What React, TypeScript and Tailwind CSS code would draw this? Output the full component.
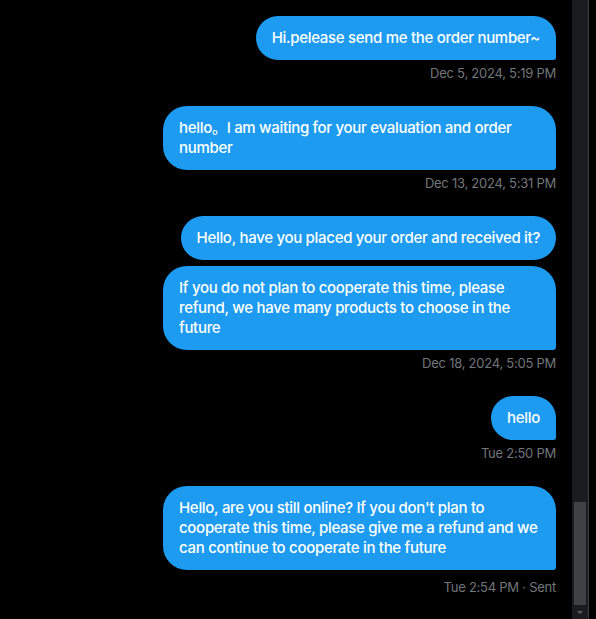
import React from "react";

type Msg = { text: string; time?: string; tail?: boolean };

const messages: Msg[] = [
  { text: "Hi.pelease send me the order number~", time: "Dec 5, 2024, 5:19 PM", tail: true },
  { text: "hello。I am waiting for your evaluation and order number", time: "Dec 13, 2024, 5:31 PM", tail: true },
  { text: "Hello, have you placed your order and received it?" },
  {
    text: "If you do not plan to cooperate this time, please refund, we have many products to choose in the future",
    time: "Dec 18, 2024, 5:05 PM",
    tail: true,
  },
  { text: "hello", time: "Tue 2:50 PM", tail: true },
  {
    text: "Hello, are you still online? If you don't plan to cooperate this time, please give me a refund and we can continue to cooperate in the future",
    time: "Tue 2:54 PM · Sent",
    tail: true,
  },
];

function Bubble({ msg, last }: { msg: Msg; last: boolean }) {
  return (
    <div className="flex flex-col items-end">
      <div
        className={
          "max-w-[393px] bg-[#1d9bf0] px-4 py-3 text-[15px] font-medium leading-5 tracking-[-0.3px] text-white " +
          (msg.tail ? "rounded-[24px] rounded-br-[3px]" : "rounded-[24px]")
        }
      >
        {msg.text}
      </div>
      {msg.time ? (
        <div
          className={
            "text-[13px] leading-4 tracking-[-0.25px] text-[#71767b] " + (last ? "mt-[9px]" : "mt-[5px]")
          }
        >
          {msg.time}
        </div>
      ) : null}
    </div>
  );
}

export default function App() {
  return (
    <div
      className="flex h-[619px] w-[596px] overflow-hidden bg-black"
      style={{ fontFamily: '"Segoe UI", Inter, "Noto Sans CJK SC", sans-serif' }}
    >
      {/* message list */}
      <div className="flex w-[572px] flex-col pr-4 pt-4">
        {messages.map((m, i) => (
          <div key={i} className={i === 0 ? "" : messages[i - 1].time ? "mt-[25px]" : "mt-[6px]"}>
            <Bubble msg={m} last={i === messages.length - 1} />
          </div>
        ))}
      </div>

      {/* scrollbar */}
      <div className="flex w-[17px] flex-col border-r border-[#3b3e41] bg-[#1b1c1f] px-[2px]">
        <div className="flex-1" />
        <div className="h-[103px] w-full bg-[#3e4245]" />
        <div className="flex h-[14px] items-center justify-center">
          <div className="h-0 w-0 border-x-[3px] border-t-[3px] border-x-transparent border-t-[#5b5e61]" />
        </div>
      </div>
    </div>
  );
}
